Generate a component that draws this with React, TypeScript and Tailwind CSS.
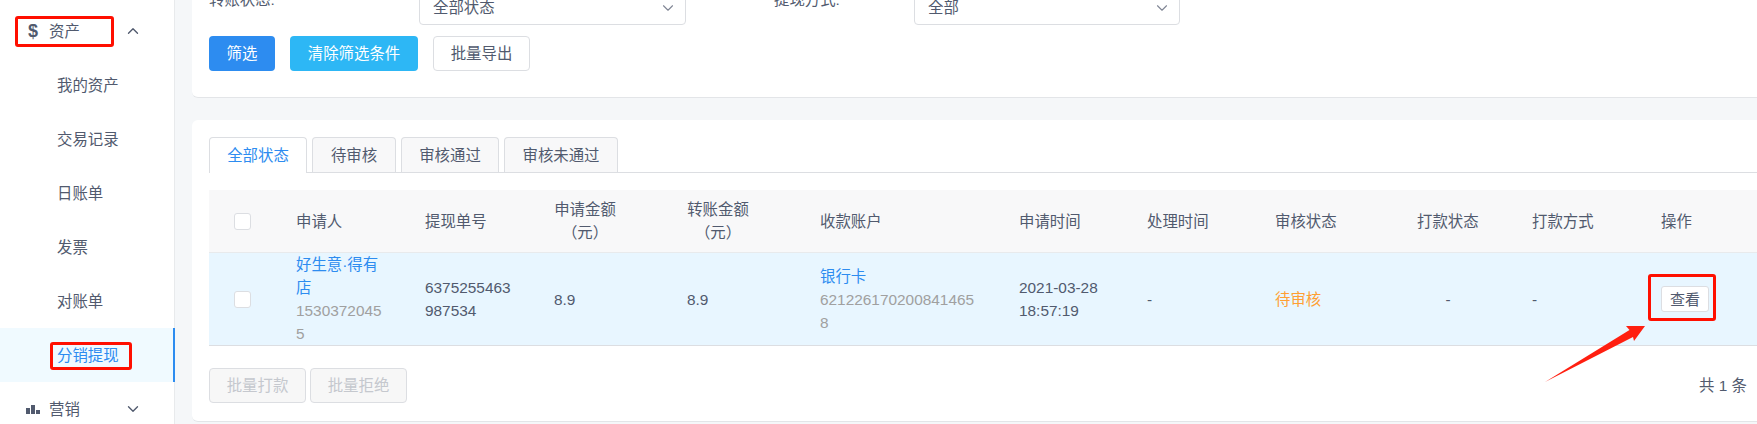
import { ChevronDown, ChevronUp } from "lucide-react";

const cols = "grid grid-cols-[87px_129px_129px_133px_133px_199px_128px_128px_142px_115px_129px_96px]";

function MenuItem({ label, active }: { label: string; active?: boolean }) {
  return (
    <div className={active ? "h-[54px] flex items-center pl-[57px] bg-[#f0faff] text-[#2d8cf0] border-r-2 border-[#2d8cf0] w-[175px]" : "h-[54px] flex items-center pl-[57px]"}>
      {label}
    </div>
  );
}

function Select({ label, width }: { label: string; width: string }) {
  return (
    <div className={`${width} h-[35px] flex items-center justify-between pl-[13px] pr-[8px] border border-[#dcdee2] rounded-[4px] bg-white`}>
      <span>{label}</span>
      <ChevronDown size={18} strokeWidth={1.5} className="text-[#808695]" />
    </div>
  );
}

function Tab({ label, active, width }: { label: string; active?: boolean; width: string }) {
  return (
    <div className={active
      ? `${width} h-[36px] flex items-center justify-center border border-b-0 border-[#dcdee2] rounded-t-[4px] bg-white text-[#2d8cf0] relative z-10`
      : `${width} h-[35px] flex items-center justify-center border border-b-0 border-[#dcdee2] rounded-t-[4px] bg-[#f8f8f9]`}>
      {label}
    </div>
  );
}

function Check() {
  return <div className="w-[17px] h-[17px] border border-[#dcdee2] rounded-[3px] bg-white" />;
}

function Th({ children }: { children: React.ReactNode }) {
  return <div className="flex items-center">{children}</div>;
}

function Td({ children }: { children: React.ReactNode }) {
  return <div className="flex items-center">{children}</div>;
}

export default function App() {
  return (
    <div className="relative flex h-[424px] w-[1757px] overflow-hidden bg-[#f5f7f9] text-[15.4px] leading-[23px] text-[#515a6e] font-['Liberation_Sans','Noto_Sans_CJK_SC',sans-serif]">
      <aside className="w-[175px] shrink-0 bg-white border-r border-[#e8eaec] pt-[4px]">
        <div className="h-[54px] flex items-center justify-between pl-[28px] pr-[32px]">
          <div className="flex items-center">
            <span className="w-[21px] font-bold text-[18px]">$</span>
            <span>资产</span>
          </div>
          <ChevronUp size={18} strokeWidth={1.8} />
        </div>
        <MenuItem label="我的资产" />
        <MenuItem label="交易记录" />
        <MenuItem label="日账单" />
        <MenuItem label="发票" />
        <MenuItem label="对账单" />
        <MenuItem label="分销提现" active />
        <div className="h-[54px] flex items-center justify-between pl-[26px] pr-[32px]">
          <div className="flex items-center">
            <svg width="14" height="9" viewBox="0 0 14 9" className="mr-[9px] text-[#515a6e]" fill="currentColor">
              <rect x="0" y="3" width="4" height="6" />
              <rect x="5" y="0" width="4" height="9" />
              <rect x="10" y="5" width="4" height="4" />
            </svg>
            <span>营销</span>
          </div>
          <ChevronDown size={18} strokeWidth={1.8} />
        </div>
      </aside>

      <main className="flex-1 pl-[17px]">
        <section className="flow-root h-[98px] bg-white border-b border-[#e3e5e8] rounded-bl-[6px] pl-[17px]">
          <div className="flex -mt-[10px] items-start">
            <div className="w-[210px] leading-[20px]">转账状态:</div>
            <Select label="全部状态" width="w-[267px]" />
            <div className="w-[88px]" />
            <div className="w-[140px] leading-[20px]">提现方式:</div>
            <Select label="全部" width="w-[266px]" />
          </div>
          <div className="flex mt-[11px]">
            <button className="w-[66px] h-[35px] rounded-[4px] bg-[#2d8cf0] text-white">筛选</button>
            <button className="w-[128px] h-[35px] ml-[15px] rounded-[4px] bg-[#2db7f5] text-white">清除筛选条件</button>
            <button className="w-[97px] h-[35px] ml-[15px] rounded-[4px] bg-white border border-[#dcdee2]">批量导出</button>
          </div>
        </section>

        <section className="mt-[22px] h-[302px] bg-white border-b border-[#e3e5e8] rounded-l-[6px] pl-[17px] pt-[17px]">
          <div className="flex gap-[5px] h-[35px] border-b border-[#dcdee2] box-content">
            <Tab label="全部状态" active width="w-[98px]" />
            <Tab label="待审核" width="w-[84px]" />
            <Tab label="审核通过" width="w-[98px]" />
            <Tab label="审核未通过" width="w-[114px]" />
          </div>

          <div className={`${cols} mt-[17px] h-[63px] bg-[#f8f8f9] border-b border-[#e8eaec]`}>
            <div className="flex items-center pl-[25px]"><Check /></div>
            <Th>申请人</Th>
            <Th>提现单号</Th>
            <Th><div className="w-[62px] text-center">申请金额（元）</div></Th>
            <Th><div className="w-[62px] text-center">转账金额（元）</div></Th>
            <Th>收款账户</Th>
            <Th>申请时间</Th>
            <Th>处理时间</Th>
            <Th>审核状态</Th>
            <Th>打款状态</Th>
            <Th>打款方式</Th>
            <Th>操作</Th>
          </div>

          <div className={`${cols} h-[93px] bg-[#e8f6ff] border-b border-[#dcdee2]`}>
            <div className="flex items-center pl-[25px]"><Check /></div>
            <Td>
              <div className="w-[88px] break-all">
                <div className="text-[#2d8cf0]">好生意·得有店</div>
                <div className="text-[#a0a0a0]">15303720455</div>
              </div>
            </Td>
            <Td><div className="w-[88px] break-all">6375255463987534</div></Td>
            <Td>8.9</Td>
            <Td>8.9</Td>
            <Td>
              <div className="w-[158px] break-all">
                <div className="text-[#2d8cf0]">银行卡</div>
                <div className="text-[#a0a0a0]">6212261702008414658</div>
              </div>
            </Td>
            <Td><div className="w-[90px]">2021-03-28 18:57:19</div></Td>
            <Td>-</Td>
            <Td><span className="text-[#ff9f33]">待审核</span></Td>
            <Td><div className="w-[62px] text-center">-</div></Td>
            <Td>-</Td>
            <Td>
              <button className="w-[48px] h-[26px] rounded-[3px] bg-white border border-[#dcdee2] text-[15px]">查看</button>
            </Td>
          </div>

          <div className="flex items-center justify-between mt-[22px] pr-[10px]">
            <div className="flex gap-[4px]">
              <button className="w-[97px] h-[35px] rounded-[4px] bg-[#f7f7f7] border border-[#dcdee2] text-[#c5c8ce]">批量打款</button>
              <button className="w-[97px] h-[35px] rounded-[4px] bg-[#f7f7f7] border border-[#dcdee2] text-[#c5c8ce]">批量拒绝</button>
            </div>
            <div>共 1 条</div>
          </div>
        </section>
      </main>

      <div className="absolute left-[15px] top-[16px] w-[99px] h-[31px] border-[3px] border-[#ff0f00] rounded-[3px]" />
      <div className="absolute left-[50px] top-[342px] w-[82px] h-[28px] border-[3px] border-[#ff0f00] rounded-[3px]" />
      <div className="absolute left-[1648px] top-[274px] w-[68px] h-[47px] border-[3px] border-[#ff0f00] rounded-[3px]" />
      <svg className="absolute left-[1540px] top-[320px]" width="110" height="66" viewBox="1540 320 110 66">
        <polygon points="1545,382 1629.5,330 1626,326 1645,326 1634,341 1633,337" fill="#ff1f10" />
      </svg>
    </div>
  );
}
